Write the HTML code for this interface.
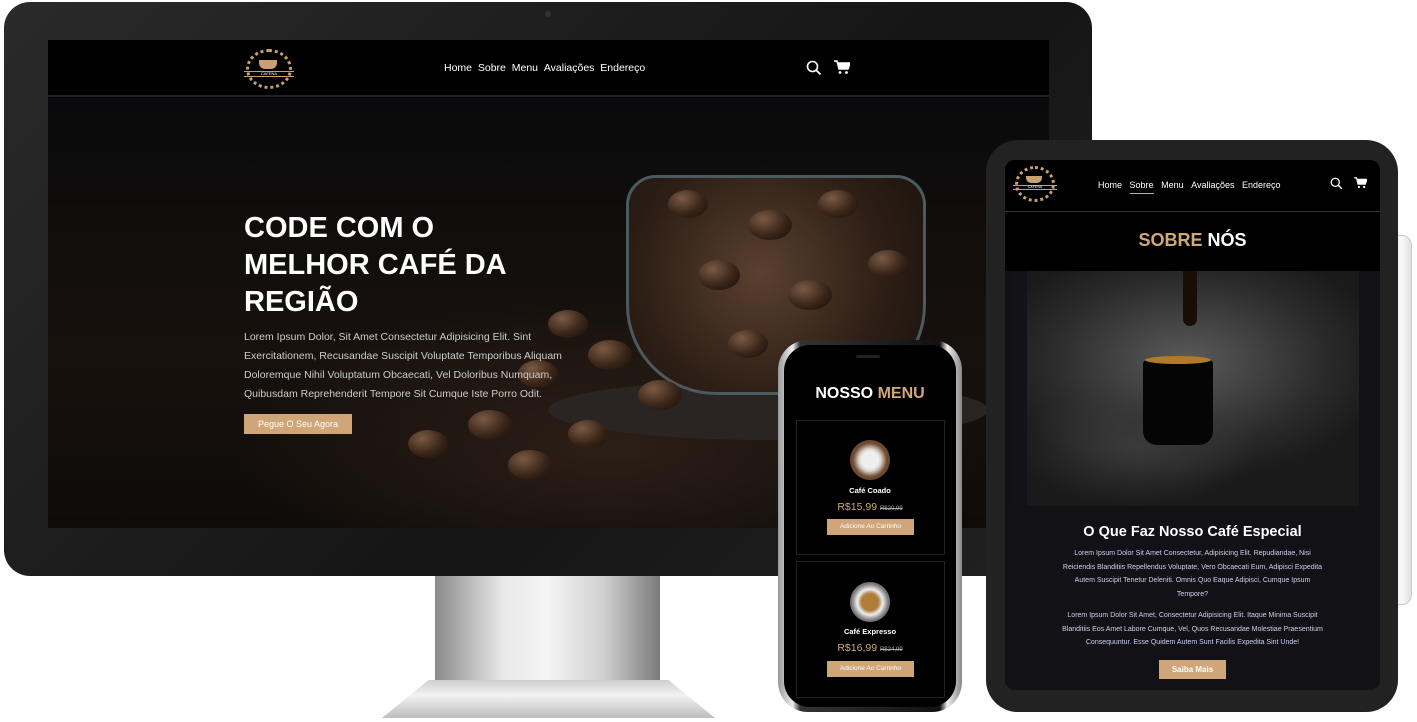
<!DOCTYPE html>
<html><head><meta charset="utf-8"><style>
*{margin:0;padding:0;box-sizing:border-box}
body{width:1417px;height:722px;background:#fff;position:relative;overflow:hidden;font-family:"Liberation Sans",sans-serif}
.a{position:absolute}
.nav a{color:#fff;text-decoration:none}
.gold{color:#d2a877}
.btn{background:#d0a678;color:#fff;text-align:center;position:absolute}
.bean{position:absolute;border-radius:50%;background:radial-gradient(ellipse at 35% 30%,#7a5a44,#3a2518 55%,#150c07)}
</style></head><body>
<!-- iMac stand -->
<div class="a" style="left:435px;top:570px;width:225px;height:120px;background:linear-gradient(90deg,#8a8a8a,#e8e8e8 30%,#f5f5f5 50%,#d0d0d0 75%,#7a7a7a)"></div>
<div class="a" style="left:382px;top:680px;width:333px;height:38px;background:linear-gradient(180deg,#cfcfcf,#f2f2f2 40%,#bdbdbd);clip-path:polygon(14% 0,86% 0,100% 100%,0 100%);"></div>
<!-- iMac body -->
<div class="a" style="left:4px;top:2px;width:1088px;height:574px;background:linear-gradient(135deg,#2a2a2a,#151515 60%,#222);border-radius:26px"></div>
<div class="a" style="left:545px;top:11px;width:6px;height:6px;border-radius:50%;background:#333"></div>
<div class="a" style="left:48px;top:40px;width:1001px;height:488px;background:#000;overflow:hidden">
  <div class="a" style="left:0;top:58px;width:1001px;height:430px;background:radial-gradient(ellipse 380px 150px at 560px 350px,#2c1f17,transparent),linear-gradient(180deg,#0a0a0c,#17110d 60%,#0e0b09)"></div>
  <div class="a" style="left:500px;top:340px;width:440px;height:60px;border-radius:50%;background:#2a2522"></div>
  <div class="a" style="left:578px;top:135px;width:300px;height:220px;border-radius:30px 30px 90px 90px;background:radial-gradient(circle at 45% 45%,#5a4030,#2e1f16 60%,#1a120d);border:3px solid #4a5a5e"></div>
  <div class="bean" style="left:620px;top:150px;width:40px;height:28px"></div>
  <div class="bean" style="left:700px;top:170px;width:44px;height:30px"></div>
  <div class="bean" style="left:770px;top:150px;width:40px;height:28px"></div>
  <div class="bean" style="left:650px;top:220px;width:42px;height:30px"></div>
  <div class="bean" style="left:740px;top:240px;width:44px;height:30px"></div>
  <div class="bean" style="left:820px;top:210px;width:40px;height:28px"></div>
  <div class="bean" style="left:680px;top:290px;width:40px;height:28px"></div>
  <div class="bean" style="left:500px;top:270px;width:40px;height:28px"></div>
  <div class="bean" style="left:540px;top:300px;width:44px;height:30px"></div>
  <div class="bean" style="left:470px;top:320px;width:40px;height:28px"></div>
  <div class="bean" style="left:590px;top:340px;width:44px;height:30px"></div>
  <div class="bean" style="left:420px;top:370px;width:44px;height:30px"></div>
  <div class="bean" style="left:520px;top:380px;width:40px;height:28px"></div>
  <div class="bean" style="left:360px;top:390px;width:40px;height:28px"></div>
  <div class="bean" style="left:460px;top:410px;width:44px;height:30px"></div>
  <div class="a" style="left:0;top:0;width:1001px;height:57px;background:#000;border-bottom:2px solid #222"></div>
  <div class="a" style="left:198px;top:9px;width:46px;height:40px;border-radius:50%;border:3px dotted #c9a072"></div>
  <div class="a" style="left:211px;top:20px;width:18px;height:9px;background:#c9a072;border-radius:0 0 6px 6px"></div>
  <div class="a" style="left:196px;top:31px;width:50px;height:6px;border-top:1px solid #c9a072;border-bottom:1px solid #c9a072;font-size:4px;color:#fff;text-align:center;line-height:4px">CAFENA</div>
  <div class="a nav" style="left:396px;top:22px;font-size:10.5px"><a>Home</a>&nbsp;&nbsp;<a>Sobre</a>&nbsp;&nbsp;<a>Menu</a>&nbsp;&nbsp;<a>Avaliações</a>&nbsp;&nbsp;<a>Endereço</a></div>
  <svg class="a" style="left:758px;top:20px" width="16" height="16" viewBox="0 0 16 16"><circle cx="6.5" cy="6.5" r="5" stroke="#fff" stroke-width="1.6" fill="none"/><path d="M10 10l4.5 4.5" stroke="#fff" stroke-width="1.8"/></svg>
  <svg class="a" style="left:786px;top:20px" width="16" height="15" viewBox="0 0 16 15"><path d="M0 1h3l2 8h9l2-6H4" stroke="#fff" stroke-width="1.5" fill="#fff"/><circle cx="6" cy="12.5" r="1.4" fill="#fff"/><circle cx="12.5" cy="12.5" r="1.4" fill="#fff"/></svg>
  <div class="a" style="left:196px;top:170px;color:#fff;font-weight:bold;font-size:29px;line-height:37px">CODE COM O<br>MELHOR CAFÉ DA<br>REGIÃO</div>
  <div class="a" style="left:196px;top:288px;width:325px;color:#ccc;font-size:10.5px;line-height:19px">Lorem Ipsum Dolor, Sit Amet Consectetur Adipisicing Elit. Sint Exercitationem, Recusandae Suscipit Voluptate Temporibus Aliquam Doloremque Nihil Voluptatum Obcaecati, Vel Doloribus Numquam, Quibusdam Reprehenderit Tempore Sit Cumque Iste Porro Odit.</div>
  <div class="btn" style="left:196px;top:374px;width:108px;height:20px;font-size:9px;line-height:20px">Pegue O Seu Agora</div>
</div>
<!-- Tablet -->
<div class="a" style="left:1390px;top:235px;width:22px;height:370px;border-radius:10px;background:linear-gradient(90deg,#ddd,#fafafa,#e0e0e0);border:1px solid #ccc"></div>
<div class="a" style="left:986px;top:140px;width:412px;height:572px;background:#222;border-radius:32px"></div>
<div class="a" style="left:1005px;top:160px;width:375px;height:530px;background:#111116;border-radius:10px;overflow:hidden">
  <div class="a" style="left:0;top:0;width:375px;height:111px;background:#000"></div>
  <div class="a" style="left:0;top:51px;width:375px;height:1px;background:#333"></div>
  <div class="a" style="left:10px;top:6px;width:40px;height:36px;border-radius:50%;border:3px dotted #c9a072"></div>
  <div class="a" style="left:21px;top:16px;width:16px;height:7px;background:#c9a072;border-radius:0 0 5px 5px"></div>
  <div class="a" style="left:8px;top:25px;width:44px;height:5px;border-top:1px solid #c9a072;border-bottom:1px solid #c9a072;font-size:3.5px;color:#fff;text-align:center;line-height:3px">CAFENA</div>
  <div class="a nav" style="left:93px;top:20px;font-size:9px"><a>Home</a>&nbsp;&nbsp;&nbsp;<a class="gold" style="border-bottom:1px solid #d2a877;padding-bottom:3px">Sobre</a>&nbsp;&nbsp;&nbsp;<a>Menu</a>&nbsp;&nbsp;&nbsp;<a>Avaliações</a>&nbsp;&nbsp;&nbsp;<a>Endereço</a></div>
  <svg class="a" style="left:325px;top:17px" width="13" height="13" viewBox="0 0 16 16"><circle cx="6.5" cy="6.5" r="5" stroke="#fff" stroke-width="1.6" fill="none"/><path d="M10 10l4.5 4.5" stroke="#fff" stroke-width="1.8"/></svg>
  <svg class="a" style="left:349px;top:17px" width="13" height="12" viewBox="0 0 16 15"><path d="M0 1h3l2 8h9l2-6H4" stroke="#fff" stroke-width="1.5" fill="#fff"/><circle cx="6" cy="12.5" r="1.4" fill="#fff"/><circle cx="12.5" cy="12.5" r="1.4" fill="#fff"/></svg>
  <div class="a" style="left:0;top:70px;width:375px;text-align:center;font-weight:bold;font-size:18px;color:#fff"><span class="gold">SOBRE</span> NÓS</div>
  <div class="a" style="left:8px;top:111px;width:346px;height:235px;background:#121218"></div>
  <div class="a" style="left:22px;top:111px;width:332px;height:235px;background:radial-gradient(ellipse 120px 60px at 110px 175px,#3a3a3a,transparent),radial-gradient(ellipse 200px 120px at 160px 90px,#5a5a5a,#2a2a2a 70%,#1a1a1a)"></div>
  <div class="a" style="left:178px;top:111px;width:14px;height:55px;background:#1a0d07;border-radius:0 0 7px 7px"></div>
  <div class="a" style="left:138px;top:200px;width:70px;height:85px;background:#050505;border-radius:4px 4px 14px 14px"></div>
  <div class="a" style="left:140px;top:196px;width:66px;height:8px;background:#b07a2a;border-radius:50%"></div>
  <div class="a" style="left:0;top:364px;width:375px;text-align:center;font-weight:bold;font-size:14.5px;color:#fff">O Que Faz Nosso Café Especial</div>
  <div class="a" style="left:55px;top:387px;width:265px;text-align:center;font-size:7px;line-height:13.5px;color:#cfd0f0">Lorem Ipsum Dolor Sit Amet Consectetur, Adipisicing Elit. Repudiandae, Nisi Reiciendis Blanditiis Repellendus Voluptate, Vero Obcaecati Eum, Adipisci Expedita Autem Suscipit Tenetur Deleniti. Omnis Quo Eaque Adipisci, Cumque Ipsum Tempore?</div>
  <div class="a" style="left:50px;top:449px;width:275px;text-align:center;font-size:7px;line-height:13.5px;color:#cfd0f0">Lorem Ipsum Dolor Sit Amet, Consectetur Adipisicing Elit. Itaque Minima Suscipit Blanditiis Eos Amet Labore Cumque, Vel, Quos Recusandae Molestiae Praesentium Consequuntur. Esse Quidem Autem Sunt Facilis Expedita Sint Unde!</div>
  <div class="btn" style="left:154px;top:500px;width:67px;height:19px;font-size:8px;line-height:19px;font-weight:bold">Saiba Mais</div>
</div>
<!-- Phone -->
<div class="a" style="left:778px;top:340px;width:184px;height:372px;border-radius:30px;background:linear-gradient(90deg,#999,#eee 8%,#333 12%,#111 88%,#eee 92%,#888)"></div>
<div class="a" style="left:784px;top:345px;width:172px;height:362px;border-radius:26px;background:#000;overflow:hidden">
  <div class="a" style="left:72px;top:10px;width:24px;height:3px;border-radius:2px;background:#222"></div>
  <div class="a" style="left:0;top:40px;width:172px;text-align:center;font-weight:bold;font-size:16px;color:#fff">NOSSO <span class="gold">MENU</span></div>
  <div class="a" style="left:12px;top:75px;width:149px;height:135px;border:1px solid #222"></div>
  <div class="a" style="left:66px;top:95px;width:40px;height:40px;border-radius:50%;background:radial-gradient(circle,#eee 30%,#d9cfc3 40%,#6d4a32 60%)"></div>
  <div class="a" style="left:0;top:141px;width:172px;text-align:center;font-size:7.5px;font-weight:bold;color:#fff">Café Coado</div>
  <div class="a" style="left:0;top:156px;width:172px;text-align:center;font-size:10.5px;color:#d2a877">R$15,99 <s style="font-size:6px;color:#aaa">R$20,99</s></div>
  <div class="btn" style="left:43px;top:174px;width:87px;height:16px;font-size:6.5px;line-height:16px">Adicione Ao Carrinho</div>
  <div class="a" style="left:12px;top:216px;width:149px;height:137px;border:1px solid #222"></div>
  <div class="a" style="left:66px;top:237px;width:40px;height:40px;border-radius:50%;background:radial-gradient(circle,#b07c3c 30%,#eee 45%,#777 65%)"></div>
  <div class="a" style="left:0;top:282px;width:172px;text-align:center;font-size:7.5px;font-weight:bold;color:#fff">Café Expresso</div>
  <div class="a" style="left:0;top:297px;width:172px;text-align:center;font-size:10.5px;color:#d2a877">R$16,99 <s style="font-size:6px;color:#aaa">R$24,99</s></div>
  <div class="btn" style="left:43px;top:316px;width:87px;height:16px;font-size:6.5px;line-height:16px">Adicione Ao Carrinho</div>
</div>
</body></html>
